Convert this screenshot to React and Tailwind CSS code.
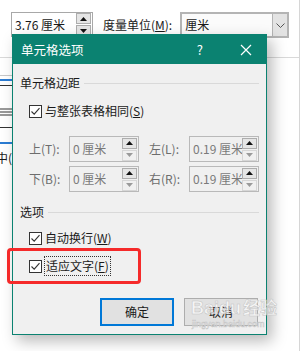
import { useState } from 'react';

const font = 'font-["Noto_Sans_CJK_SC","Noto_Sans",sans-serif]';

function Check({ checked, onToggle }) {
  return (
    <span
      onClick={onToggle}
      className="w-[13px] h-[13px] border border-[#333] bg-white flex items-center justify-center shrink-0"
    >
      {checked && (
        <svg width="11" height="11" viewBox="0 0 11 11">
          <path d="M1.5 5.5 L4.2 8.2 L9.5 2.2" fill="none" stroke="#333" strokeWidth="1.1" />
        </svg>
      )}
    </span>
  );
}

function Spin({ disabled }) {
  return (
    <div className="flex flex-col w-[15px] h-[23px] gap-px">
      <div className="flex-1 flex items-center justify-center bg-[#e5e5e5] border border-[#adadad]">
        <svg width="7" height="4" viewBox="0 0 7 4"><path d="M0 4 L3.5 0 L7 4 Z" fill="#111" /></svg>
      </div>
      <div className={`flex-1 flex items-center justify-center border ${disabled ? 'bg-[#f0f0f0] border-[#d6d6d6]' : 'bg-[#e5e5e5] border-[#adadad]'}`}>
        <svg width="7" height="4" viewBox="0 0 7 4"><path d="M0 0 L3.5 4 L7 0 Z" fill={disabled ? '#9a9a9a' : '#111'} /></svg>
      </div>
    </div>
  );
}

function MarginField({ label, value }) {
  return (
    <div className="flex items-center">
      <span className="w-[40px] text-[#6d6d6d]">{label}</span>
      <div className="w-[70px] h-[26px] border border-[#b9b9b9] bg-[#f0f0f0] flex items-center justify-between pl-[3px] pr-px">
        <span className="text-[#7a7a7a] whitespace-nowrap overflow-hidden">{value}</span>
        <Spin disabled />
      </div>
    </div>
  );
}

export default function App() {
  const [same, setSame] = useState(true);
  const [wrap, setWrap] = useState(true);
  const [fit, setFit] = useState(true);

  return (
    <div className={`relative w-[307px] h-[351px] bg-white overflow-hidden text-[12px] leading-[16px] text-[#1a1a1a] ${font}`}>
      {/* page behind the dialog */}
      <div className="flex h-full">
        <div className="w-[299px] flex flex-col">
          <div className="flex items-center pt-[12px] pl-[11px] h-[38px]">
            <div className="w-[82px] h-[25px] border border-[#a8a8a8] bg-white flex items-center justify-between pl-[3px] pr-px self-start">
              <span>3.76 厘米</span>
              <Spin />
            </div>
            <span className="ml-[10px]">度量单位(<span className="underline">M</span>):</span>
            <div className="ml-[8px] w-[109px] h-[26px] border-2 border-[#b4b4b4] bg-[#fbfbfb] flex items-center justify-between self-start">
              <span className="pl-[3px]">厘米</span>
              <div className="w-[15px] h-full bg-[#e3e3e3] border-l border-[#b4b4b4] flex items-center justify-center">
                <svg width="9" height="5" viewBox="0 0 9 5"><path d="M0.5 0.5 L4.5 4.5 L8.5 0.5" fill="none" stroke="#555" /></svg>
              </div>
            </div>
          </div>
          <div className="mt-[19px] h-px bg-[#d9d9d9]" />
          <div className="w-[12px] flex flex-col overflow-hidden">
            <div className="mt-[17px] h-px bg-[#c8c8c8]" />
            <div className="mt-[3px] h-[2px] bg-[#2b7cd3]" />
            <div className="mt-[4px] h-px bg-[#333]" />
            <div className="mt-[22px] h-[2px] bg-[#999]" />
            <div className="mt-px h-[2px] bg-[#999]" />
            <div className="mt-px h-[2px] bg-[#999]" />
            <div className="mt-[11px] h-px bg-[#333]" />
            <div className="mt-[14px] h-[2px] bg-[#2b7cd3]" />
            <span className="mt-[6px] -ml-[4px] whitespace-nowrap">中(</span>
          </div>
        </div>
        <div className="w-px bg-[#d6d6d6]" />
      </div>

      {/* dialog */}
      <div className="absolute left-[12px] top-[34px] w-[255px] h-[301px] border border-[#0b8271] bg-[#f0f0f0] flex flex-col shadow-[5px_6px_14px_rgba(0,0,0,0.28)]">
        <div className="h-[29px] bg-[#0b8271] text-white flex items-center pl-[8px] pr-[14px] shrink-0">
          <span className="flex-1 text-[12.5px]">单元格选项</span>
          <span className="mr-[37px] text-[13px]">?</span>
          <svg width="12" height="12" viewBox="0 0 12 12">
            <path d="M1 1 L11 11 M11 1 L1 11" stroke="#fff" strokeWidth="1.2" />
          </svg>
        </div>

        <div className="flex flex-col pl-[7px] pr-[7px]">
          <div className="mt-[11px] flex items-center gap-[4px]">
            <span>单元格边距</span>
            <div className="flex-1 h-px bg-[#d9d9d9]" />
          </div>

          <label className="mt-[12px] pl-[9px] flex items-center gap-[3px]">
            <Check checked={same} onToggle={() => setSame(!same)} />
            <span>与整张表格相同(<span className="underline">S</span>)</span>
          </label>

          <div className="mt-[17px] pl-[9px] flex flex-col gap-[4px]">
            <div className="flex gap-[10px]">
              <MarginField label="上(T):" value="0 厘米" />
              <MarginField label="左(L):" value="0.19 厘米" />
            </div>
            <div className="flex gap-[10px]">
              <MarginField label="下(B):" value="0 厘米" />
              <MarginField label="右(R):" value="0.19 厘米" />
            </div>
          </div>

          <div className="mt-[12px] flex items-center gap-[4px]">
            <span>选项</span>
            <div className="flex-1 h-px bg-[#d9d9d9]" />
          </div>

          <label className="mt-[10px] pl-[9px] flex items-center gap-[3px]">
            <Check checked={wrap} onToggle={() => setWrap(!wrap)} />
            <span>自动换行(<span className="underline">W</span>)</span>
          </label>

          <label className="mt-[10px] pl-[9px] flex items-center gap-[2px]">
            <Check checked={fit} onToggle={() => setFit(!fit)} />
            <span className="border border-dotted border-[#333] px-px py-[1px]">适应文字(<span className="underline">F</span>)</span>
          </label>

          <div className="mt-[22px] flex justify-end gap-[10px] pr-px">
            <button className="w-[74px] h-[28px] border-2 border-[#0078d7] bg-[#e1e1e1]">确定</button>
            <button className="w-[74px] h-[28px] border border-[#adadad] bg-[#e1e1e1]">取消</button>
          </div>
        </div>
      </div>

      {/* annotation */}
      <div className="absolute left-[7px] top-[248px] w-[134px] h-[36px] border-[3px] border-[#f52a2a] rounded-[4px]" />

      {/* watermark */}
      <div className="absolute left-[191px] top-[298px] flex flex-col items-start text-white/70 [-webkit-text-stroke:0.5px_#c4c4c4] pointer-events-none">
        <span className='font-["Liberation_Sans","Noto_Sans_CJK_SC",sans-serif] text-[18px] leading-[20px] font-bold whitespace-nowrap'>Baidu<span className="ml-[2px] text-[17px]">经验</span></span>
        <span className='font-["Liberation_Sans",sans-serif] text-[9px] leading-[11px] ml-px'>jingyan.baidu.com</span>
      </div>
    </div>
  );
}
